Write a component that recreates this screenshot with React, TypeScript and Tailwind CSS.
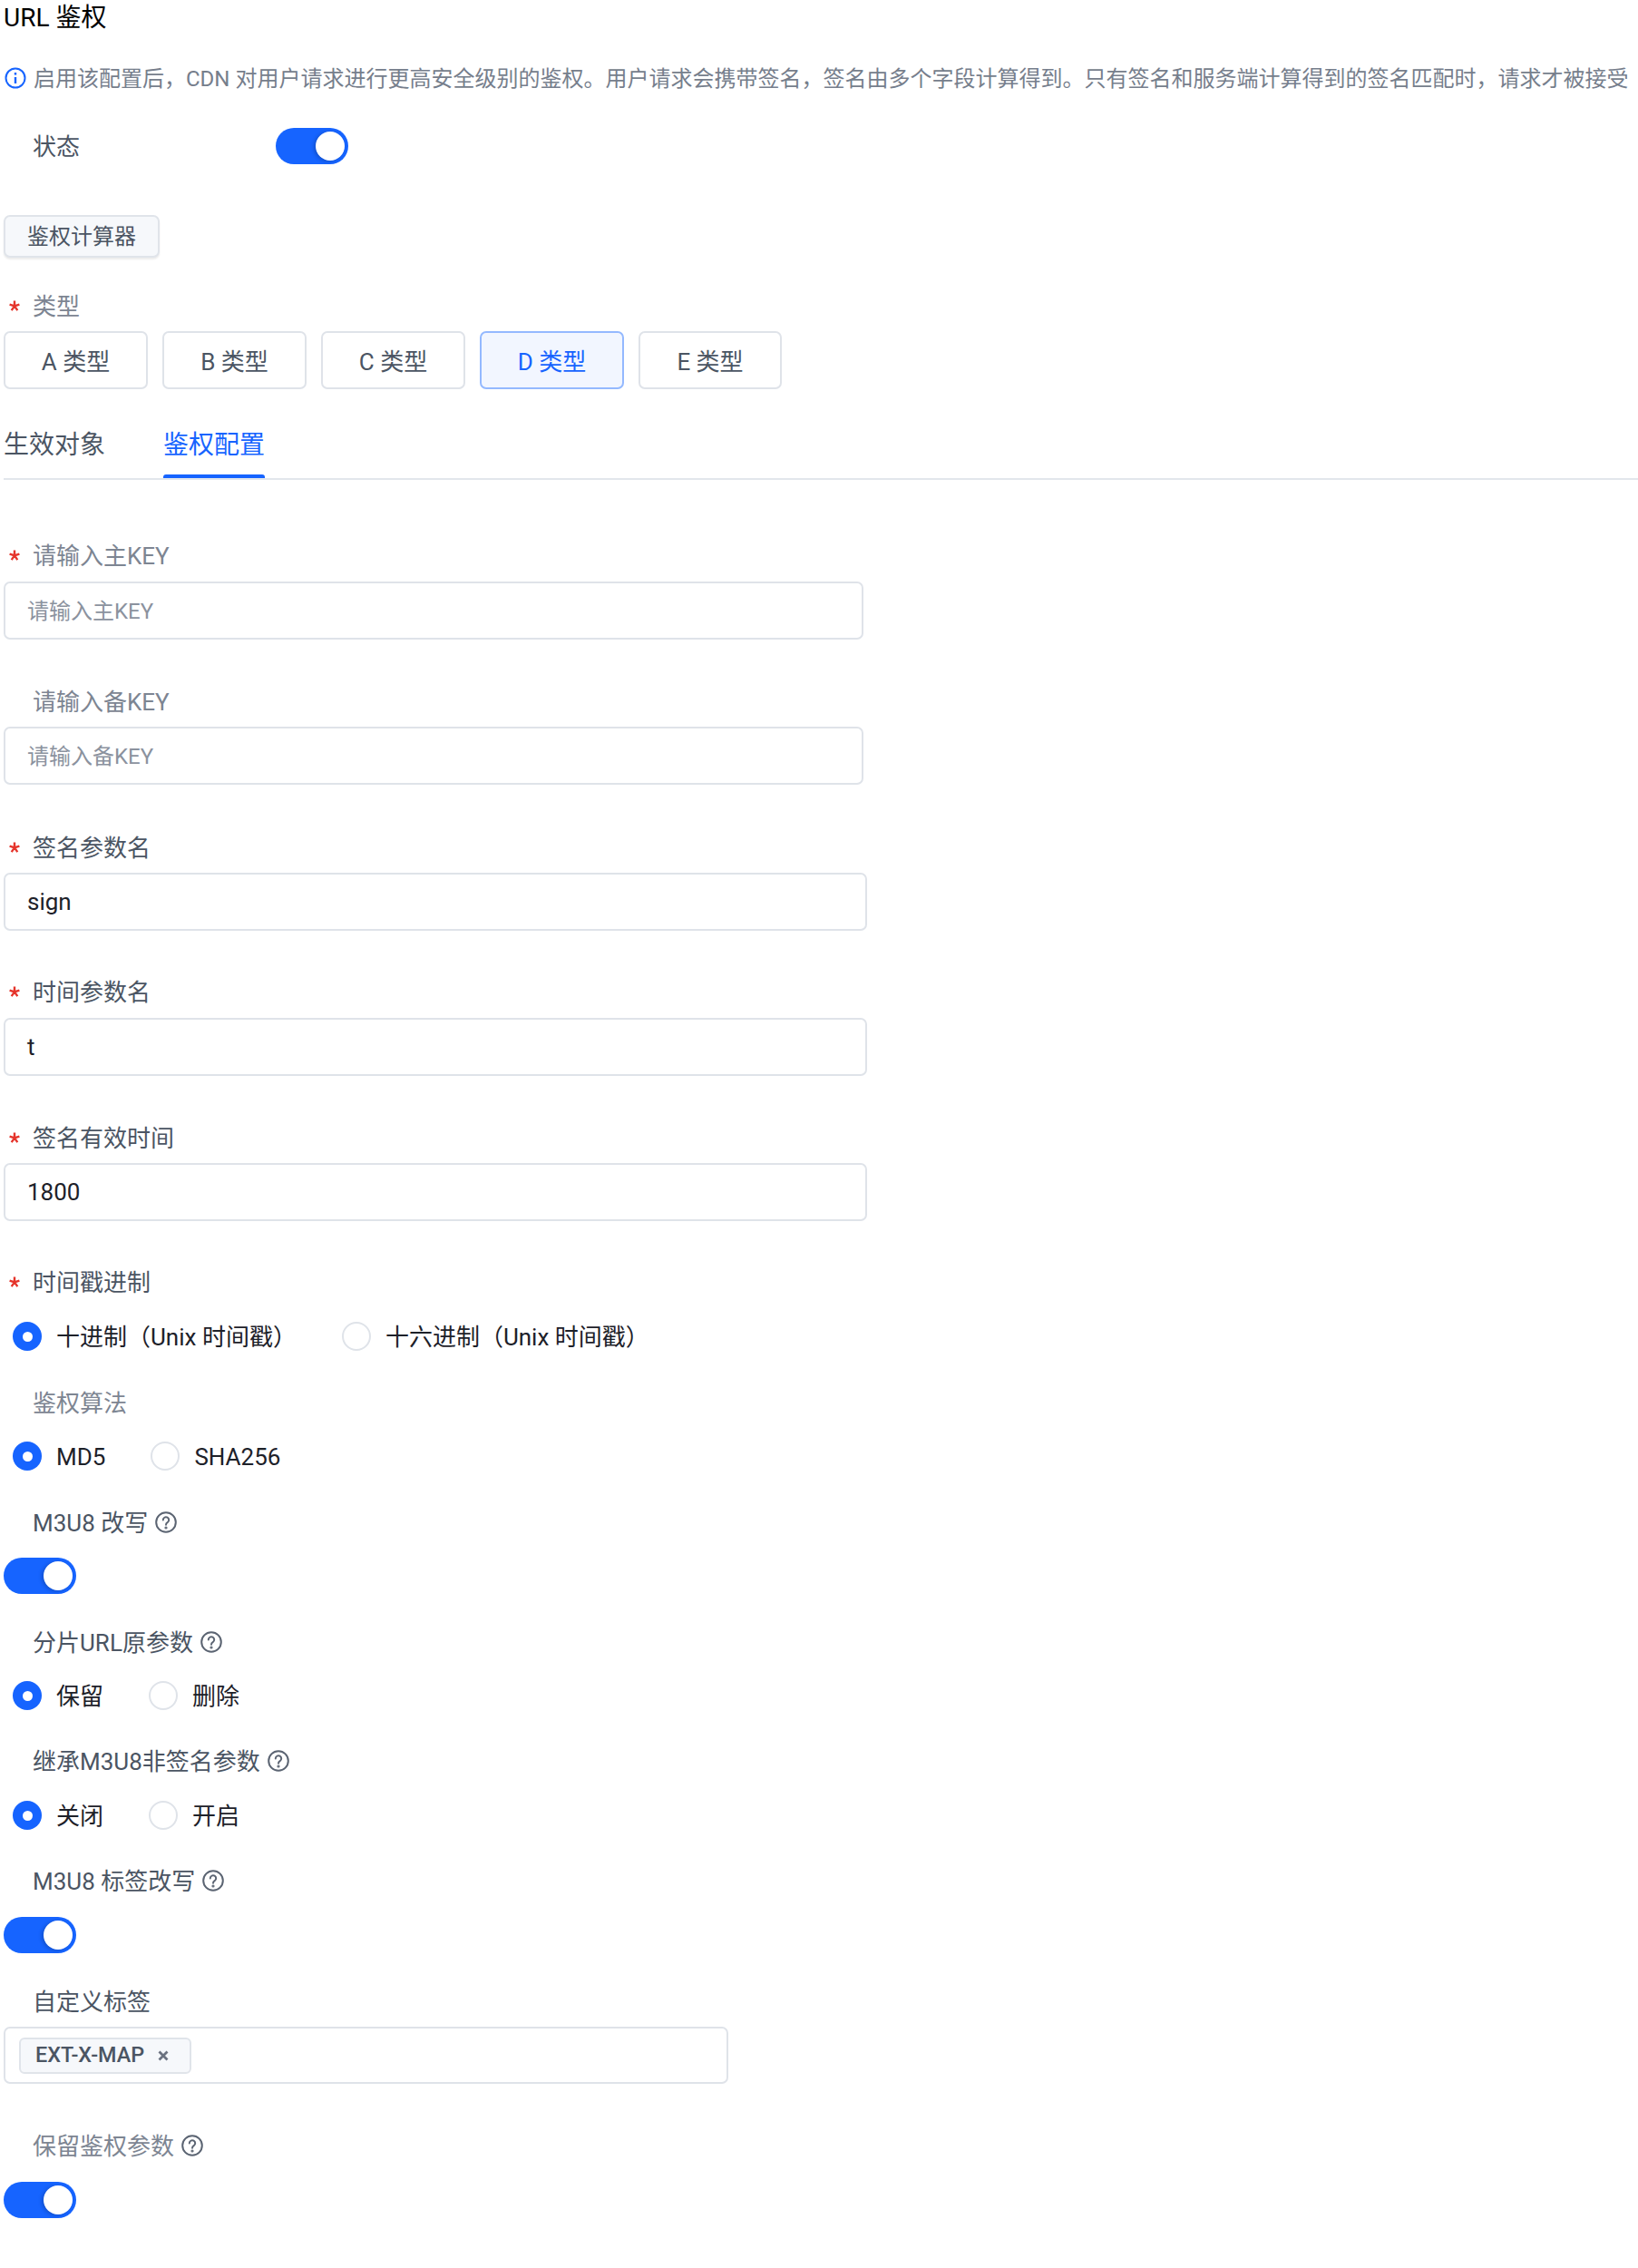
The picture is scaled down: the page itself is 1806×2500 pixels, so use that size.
import { ReactNode } from "react";

const Toggle = ({ className = "" }: { className?: string }) => (
  <div className={`relative h-[40px] w-[80px] rounded-full bg-[#1664ff] ${className}`}>
    <div className="absolute right-[4px] top-[4px] h-[32px] w-[32px] rounded-full bg-white shadow-[-2px_1px_4px_rgba(0,0,0,0.2)]" />
  </div>
);

const Help = () => (
  <svg className="ml-[8px] h-[24px] w-[24px] text-[#5b6472]" viewBox="0 0 24 24" fill="none" stroke="currentColor" strokeWidth="2">
    <circle cx="12" cy="12" r="10.8" />
    <path d="M8.800 9.500a3.200 3.200 0 1 1 4.900 2.700c-1.100.7-1.700 1.200-1.700 2.600" strokeLinecap="round" />
    <circle cx="12" cy="18" r="0.6" fill="currentColor" />
  </svg>
);

const Label = ({ children, required, light, help, className = "" }: { children: ReactNode; required?: boolean; light?: boolean; help?: boolean; className?: string }) => (
  <div className={`flex h-[40px] items-center text-[26px] ${light ? "text-[#7d8592]" : "text-[#4b5563]"} ${className}`}>
    <span className="flex w-[32px] pl-[6px] text-[#e5342b]">
      {required ? (
        <svg className="h-[12px] w-[12px]" viewBox="0 0 12 12" fill="none" stroke="currentColor" strokeWidth="2.400">
          <path d="M6 6.400V.6M6 6.400l5.400-1.800M6 6.400l3.300 4.700M6 6.400l-3.300 4.700M6 6.400L.6 4.600" />
        </svg>
      ) : null}
    </span>
    <span className="pt-[1px]">{children}</span>
    {help ? <Help /> : null}
  </div>
);

const TextInput = ({ value, placeholder, wide, className = "" }: { value?: string; placeholder?: string; wide?: boolean; className?: string }) => (
  <div className={`flex h-[64px] items-center rounded-[7px] border-2 border-[#dfe3e9] px-[24px] ${wide ? "w-[952px]" : "w-[948px]"} ${value ? "text-[26px] text-[#1d2129]" : "pt-[2px] text-[24px] text-[#8b929e]"} ${className}`}>
    {value ?? placeholder}
  </div>
);

const Radio = ({ label, checked, spacing = "" }: { label: string; checked?: boolean; spacing?: string }) => (
  <div className={`flex items-center ${spacing}`}>
    {checked ? (
      <div className="flex h-[32px] w-[32px] items-center justify-center rounded-full bg-[#1664ff]">
        <div className="h-[11px] w-[11px] rounded-full bg-white" />
      </div>
    ) : (
      <div className="h-[32px] w-[32px] rounded-full border-2 border-[#dfe3e9]" />
    )}
    <span className="ml-[16px] pt-[1px] text-[26px] text-[#1d2129]">{label}</span>
  </div>
);

const TypeButton = ({ label, active, narrow }: { label: string; active?: boolean; narrow?: boolean }) => (
  <div className={`flex h-[64px] items-center justify-center rounded-[7px] border-2 pt-[3px] text-[26px] ${narrow ? "w-[158px]" : "w-[159px]"} ${active ? "border-[#94b9ff] bg-[#f2f6ff] text-[#1664ff]" : "border-[#dfe3e9] text-[#4b5563]"}`}>
    {label}
  </div>
);

export default function App() {
  return (
    <div className="min-h-[2500px] bg-white pl-[4px] font-['Roboto','Noto_Sans_CJK_SC',sans-serif] leading-none">
      <div className="flex h-[38px] items-center pt-[2px] text-[28px] text-black">URL 鉴权</div>

      <div className="mt-[28px] flex h-[40px] items-center whitespace-nowrap text-[24px] text-[#767e8c]">
        <svg className="ml-[1px] mr-[8px] h-[24px] w-[24px] shrink-0 text-[#1664ff]" viewBox="0 0 24 24" fill="none" stroke="currentColor" strokeWidth="2">
          <circle cx="12" cy="12" r="10.500" />
          <path d="M12 11v7" strokeWidth="2.400" />
          <path d="M12 6v2.600" strokeWidth="2.400" />
        </svg>
        <span className="pt-[2px]">启用该配置后，CDN 对用户请求进行更高安全级别的鉴权。用户请求会携带签名，签名由多个字段计算得到。只有签名和服务端计算得到的签名匹配时，请求才被接受</span>
      </div>

      <div className="mt-[35px] flex h-[40px] items-center text-[26px] text-[#4b5563]">
        <span className="w-[300px] pl-[32px] pt-[1px]">状态</span>
        <Toggle />
      </div>

      <div className="mt-[56px] flex h-[47px] w-[172px] items-center justify-center rounded-[7px] border-2 border-[#e0e4ea] bg-[#f6f8fb] text-[24px] text-[#4b5563] shadow-[0_2px_2px_rgba(0,0,0,0.08)]">
        鉴权计算器
      </div>

      <Label required light className="mt-[33px]">类型</Label>
      <div className="mt-[8px] flex gap-[16px]">
        <TypeButton label="A 类型" />
        <TypeButton label="B 类型" />
        <TypeButton label="C 类型" />
        <TypeButton label="D 类型" active />
        <TypeButton label="E 类型" narrow />
      </div>

      <div className="mt-[21px] flex h-[79px] w-[1802px] gap-[64px] border-b-2 border-[#e2e6ec] text-[28px]">
        <div className="flex h-[77px] items-center pt-[4px] text-[#4b5563]">生效对象</div>
        <div className="relative flex h-[77px] items-center pt-[4px] text-[#1664ff]">
          鉴权配置
          <div className="absolute bottom-0 left-0 h-[4px] w-full rounded-t-[3px] bg-[#1664ff]" />
        </div>
      </div>

      <Label required light className="mt-[63px]">请输入主KEY</Label>
      <TextInput placeholder="请输入主KEY" className="mt-[9px]" />
      <Label light className="mt-[48px]">请输入备KEY</Label>
      <TextInput placeholder="请输入备KEY" className="mt-[8px]" />
      <Label required className="mt-[49px]">签名参数名</Label>
      <TextInput value="sign" wide className="mt-[8px]" />
      <Label required className="mt-[47px]">时间参数名</Label>
      <TextInput value="t" wide className="mt-[9px]" />
      <Label required className="mt-[48px]">签名有效时间</Label>
      <TextInput value="1800" wide className="mt-[8px]" />

      <Label required className="mt-[47px]">时间戳进制</Label>
      <div className="mt-[20px] flex h-[40px] pl-[10px]">
        <Radio label="十进制（Unix 时间戳）" checked />
        <Radio label="十六进制（Unix 时间戳）" spacing="ml-[50px]" />
      </div>

      <Label light className="mt-[33px]">鉴权算法</Label>
      <div className="mt-[19px] flex h-[40px] pl-[10px]">
        <Radio label="MD5" checked />
        <Radio label="SHA256" spacing="ml-[50px]" />
      </div>

      <Label help className="mt-[33px]">M3U8 改写</Label>
      <Toggle className="mt-[19px]" />

      <Label help className="mt-[33px]">分片URL原参数</Label>
      <div className="mt-[19px] flex h-[40px] pl-[10px]">
        <Radio label="保留" checked />
        <Radio label="删除" spacing="ml-[50px]" />
      </div>

      <Label help className="mt-[32px]">继承M3U8非签名参数</Label>
      <div className="mt-[20px] flex h-[40px] pl-[10px]">
        <Radio label="关闭" checked />
        <Radio label="开启" spacing="ml-[50px]" />
      </div>

      <Label help className="mt-[32px]">M3U8 标签改写</Label>
      <Toggle className="mt-[20px]" />

      <Label className="mt-[33px]">自定义标签</Label>
      <div className="mt-[8px] flex h-[63px] w-[799px] items-center rounded-[7px] border-2 border-[#dfe3e9] pl-[15px]">
        <div className="flex h-[40px] w-[190px] items-center rounded-[6px] border-2 border-[#e0e4ea] bg-[#f6f8fb] pl-[16px] text-[23.400px] font-medium text-[#4b5563]">
          EXT-X-MAP
          <svg className="ml-[15px] h-[12px] w-[12px] text-[#6b7280]" viewBox="0 0 12 12" fill="none" stroke="currentColor" strokeWidth="2.800">
            <path d="M1.500 1.500l9 9M10.500 1.500l-9 9" />
          </svg>
        </div>
      </div>

      <Label light help className="mt-[48px]">保留鉴权参数</Label>
      <Toggle className="mt-[20px]" />
    </div>
  );
}
